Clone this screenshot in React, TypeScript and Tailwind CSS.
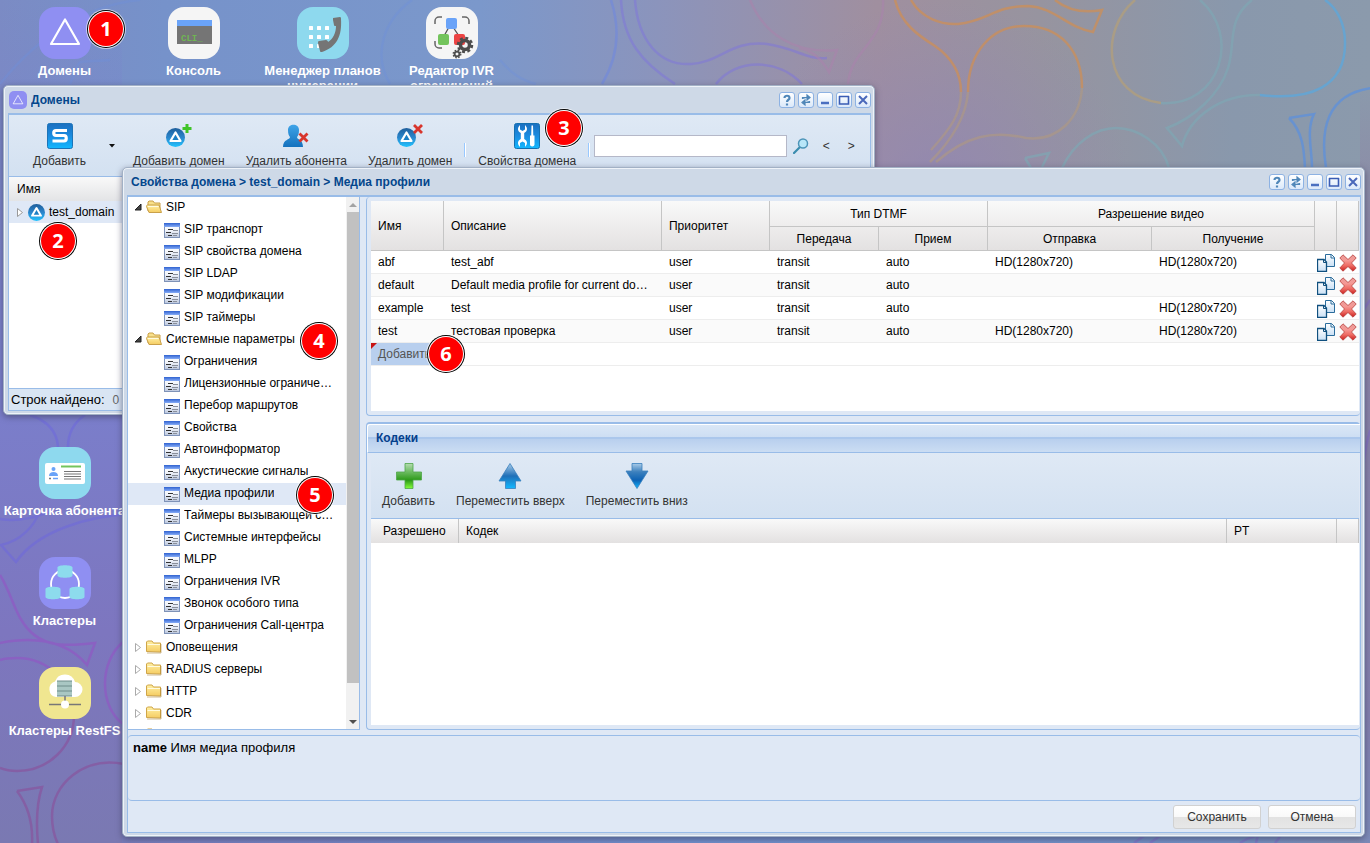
import { useState } from 'react';
import type { ReactNode } from 'react';

interface TreeLeaf {
  id: string;
  label: string;
}

interface TreeGroup {
  id: string;
  label: string;
  children?: TreeLeaf[];
}

interface MediaProfile {
  name: string;
  description: string;
  priority: string;
  dtmfOut: string;
  dtmfIn: string;
  videoOut: string;
  videoIn: string;
}

const TREE: TreeGroup[] = [
  {
    id: 'sip',
    label: 'SIP',
    children: [
      { id: 'sip-transport', label: 'SIP транспорт' },
      { id: 'sip-domain', label: 'SIP свойства домена' },
      { id: 'sip-ldap', label: 'SIP LDAP' },
      { id: 'sip-mod', label: 'SIP модификации' },
      { id: 'sip-timers', label: 'SIP таймеры' },
    ],
  },
  {
    id: 'system',
    label: 'Системные параметры',
    children: [
      { id: 'limits', label: 'Ограничения' },
      { id: 'license', label: 'Лицензионные ограничения' },
      { id: 'routes', label: 'Перебор маршрутов' },
      { id: 'props', label: 'Свойства' },
      { id: 'auto', label: 'Автоинформатор' },
      { id: 'tones', label: 'Акустические сигналы' },
      { id: 'media', label: 'Медиа профили' },
      { id: 'caller-timers', label: 'Таймеры вызывающей стороны' },
      { id: 'interfaces', label: 'Системные интерфейсы' },
      { id: 'mlpp', label: 'MLPP' },
      { id: 'ivr', label: 'Ограничения IVR' },
      { id: 'ring', label: 'Звонок особого типа' },
      { id: 'callcenter', label: 'Ограничения Call-центра' },
    ],
  },
  { id: 'alerts', label: 'Оповещения' },
  { id: 'radius', label: 'RADIUS серверы' },
  { id: 'http', label: 'HTTP' },
  { id: 'cdr', label: 'CDR' },
  { id: 'other', label: '' },
];

const PROFILES: MediaProfile[] = [
  { name: 'abf', description: 'test_abf', priority: 'user', dtmfOut: 'transit', dtmfIn: 'auto', videoOut: 'HD(1280x720)', videoIn: 'HD(1280x720)' },
  { name: 'default', description: 'Default media profile for current domain', priority: 'user', dtmfOut: 'transit', dtmfIn: 'auto', videoOut: '', videoIn: '' },
  { name: 'example', description: 'test', priority: 'user', dtmfOut: 'transit', dtmfIn: 'auto', videoOut: '', videoIn: 'HD(1280x720)' },
  { name: 'test', description: 'тестовая проверка', priority: 'user', dtmfOut: 'transit', dtmfIn: 'auto', videoOut: 'HD(1280x720)', videoIn: 'HD(1280x720)' },
];

// Gradients shared by all the small icons
function IconDefs() {
  const gradients: [string, string[]][] = [
    ['g-folder', ['#fff0a4', '#f5cc62']],
    ['g-leaf', ['#ffffff', '#f1f4fa', '#b9c5dc']],
    ['g-leaf-top', ['#2f62d0', '#86acf6']],
    ['g-blue', ['#1b6fc0', '#1a8ce0', '#12b8ff']],
    ['g-sphere', ['#1f5f9c', '#2a86cc', '#22c4ff']],
    ['g-user', ['#3fa4e8', '#1471bd']],
    ['g-plus', ['#b5dcb0', '#6dbb62', '#2c9a18', '#86ff3c']],
    ['g-arrow', ['#a9cbe8', '#1e6fb8', '#12b8ff']],
    ['g-arrow-down', ['#a9cbe8', '#3c80bd', '#0d62b4', '#12b8ff']],
    ['g-cross', ['#e89a98', '#f59a96', '#ee6a62', '#c81e1e']],
    ['g-page', ['#ffffff', '#c9e0f5']],
  ];
  return (
    <svg className="absolute size-0" aria-hidden="true">
      <defs>
        {gradients.map(([id, stops]) => (
          <linearGradient key={id} id={id} x1="0" y1="0" x2="0" y2="1">
            {stops.map((color, i) => (
              <stop key={i} offset={i / (stops.length - 1)} stopColor={color} />
            ))}
          </linearGradient>
        ))}
      </defs>
    </svg>
  );
}

function Wallpaper() {
  return (
    <svg
      className="absolute inset-0 h-full w-full"
      viewBox="0 0 1370 843"
      preserveAspectRatio="none"
      aria-hidden="true"
    >
      <defs>
        <linearGradient id="bg-top" x1="0" y1="0" x2="1" y2="0">
          <stop offset="0" stopColor="#7b8bc4" />
          <stop offset="0.12" stopColor="#7692ca" />
          <stop offset="0.35" stopColor="#7b98cb" />
          <stop offset="0.48" stopColor="#8b94bc" />
          <stop offset="0.64" stopColor="#a08f9f" />
          <stop offset="0.76" stopColor="#97949f" />
          <stop offset="0.9" stopColor="#8998ac" />
          <stop offset="1" stopColor="#8b9aac" />
        </linearGradient>
        <linearGradient id="bg-bottom" x1="0" y1="0" x2="1" y2="0">
          <stop offset="0" stopColor="#7b78b2" />
          <stop offset="0.15" stopColor="#757dbd" />
          <stop offset="0.5" stopColor="#6f8ecb" />
          <stop offset="0.9" stopColor="#7390c4" />
          <stop offset="1" stopColor="#7f8cb0" />
        </linearGradient>
        <linearGradient id="bg-side" x1="0" y1="0" x2="0" y2="1">
          <stop offset="0" stopColor="#7b80cc" stopOpacity="0" />
          <stop offset="0.45" stopColor="#7a7fcc" />
          <stop offset="0.75" stopColor="#7d76bf" />
          <stop offset="1" stopColor="#7a79b2" />
        </linearGradient>
        <linearGradient id="bg-fade" x1="0" y1="0" x2="0" y2="1">
          <stop offset="0.2" stopColor="#fff" stopOpacity="0" />
          <stop offset="1" stopColor="#fff" />
        </linearGradient>
        <radialGradient id="bg-violet" gradientUnits="userSpaceOnUse" cx="940" cy="190" r="190">
          <stop offset="0" stopColor="#9086b4" stopOpacity="0.8" />
          <stop offset="1" stopColor="#9086b4" stopOpacity="0" />
        </radialGradient>
        <linearGradient id="bg-right" x1="0" y1="0" x2="0" y2="1">
          <stop offset="0.1" stopColor="#8c84a4" stopOpacity="0" />
          <stop offset="0.3" stopColor="#8c84a4" />
          <stop offset="0.85" stopColor="#837fae" />
          <stop offset="1" stopColor="#7c8ab8" />
        </linearGradient>
        <mask id="bg-mask">
          <rect width="1370" height="843" fill="url(#bg-fade)" />
        </mask>
      </defs>
      <rect width="1370" height="843" fill="url(#bg-top)" />
      <rect width="1370" height="843" fill="url(#bg-bottom)" mask="url(#bg-mask)" />
      <rect width="122" height="843" fill="url(#bg-side)" />
      <rect width="1370" height="843" fill="url(#bg-violet)" />
      <rect x="1360" width="10" height="843" fill="url(#bg-right)" />
      <g fill="none" strokeWidth="2.500" strokeOpacity="0.55">
        <path stroke="#6d8fdc" strokeOpacity="0.35" d="M500 60c10 12 20 20 36 24M390 84c-18-30-6-64 22-84M0 84c40-50 90-80 140-84M70 84c14-30 0-20 40-24" />
        <path stroke="#6e86e0" d="M611 0c9 28 8 56-9 84" />
        <path stroke="#7f77d8" d="M621 0c2 40 20 62 54 84M635 0c3 40 24 66 56 64 30-2 40-24 76-20 28 4 40 16 60 14M716 84c20-26 62-26 86 0" />
        <path stroke="#a883ac" strokeOpacity="0.6" d="M750 0c14 34 44 54 87 50l-8 22c-8-14-18-22-30-24M883 0c2 44-32 48-35 84" />
        <path stroke="#d08f52" strokeOpacity="0.7" d="M895 0c6 24 24 36 40 46 20 14 26 30 26 46M911 0c10 18 30 25 47 24 30-3 36-18 70-18 26 1 40 22 65 26l9-22c-22 4-36-1-47-10M968 92c0-40 24-66 56-66 36 0 58 24 58 62" />
        <path stroke="#b09a80" strokeOpacity="0.6" d="M961 92c0 22-10 36-30 58M968 92c-2 26-16 48-38 70M1082 88c-2 30-24 54-56 50-34-8-60-2-90 24" />
        <path stroke="#b5a078" strokeOpacity="0.7" d="M1135 0c-36 30-32 96 26 103" />
        <path stroke="#7fa6b4" strokeOpacity="0.7" d="M1161 103c60 4 80-68 39-103M1252 0c-26 20-16 44-24 68-8 26-34 50-61 60l15 18c8-30 40-52 78-51M1062 168c12-26 34-40 54-40s46 14 53 40M1025 158l24-5-7 14M1025 158l6 10" />
        <path stroke="#58a8e0" strokeOpacity="0.7" d="M1260 95c50 6 86-8 85-53 0-18-8-34-20-42" />
        <path stroke="#5c90dc" strokeOpacity="0.75" d="M1372 88c-46 6-52 42-46 80M1289 118l25-4c-8 16-2 36-2 54M1289 118c14 14 15 32 16 50" />
        <path stroke="#6d68dc" d="M30 415c18 6 27 16 28 32M85 415c-12 8-17 18-17 32M0 519c20 3 36-2 52-8M130 514c-40 2-92 16-114 48L1 545c20-4 34-20 38-33" />
        <path stroke="#9650c4" d="M0 575c10 16 14 34 22 46 16 26 40 26 73 22l-8 22c-22-26-56-28-87-22M17 658c32 0 57 26 57 57M0 660c6-2 12-2 17-2M123 642c-24 20-24 64 0 82" />
        <path stroke="#8c4a98" d="M74 715c0 32-26 56-57 56-6 0-12-1-17-3M124 764c-40-8-72 20-72 52 0 10 2 20 6 28M17 791l25-4c-6 18-6 36-4 57M17 791c12 16 16 34 15 53" />
        <path stroke="#8068c8" d="M1370 300l-8 12M1370 430c-6 20-6 34-8 50M1134 843l14-10M1150 843l14-10M1240 843c8-6 14-6 18-8l-2 8M1275 843l8-10" />
      </g>
    </svg>
  );
}

function DomainsGlyph() {
  return (
    <svg viewBox="0 0 52 52" className="size-full">
      <path d="M26 12.500L12 37h28z" fill="none" stroke="#fff" strokeWidth="2.200" strokeLinejoin="round" />
    </svg>
  );
}

function ConsoleGlyph() {
  return (
    <svg viewBox="0 0 52 52" className="size-full">
      <rect x="9" y="13" width="35" height="24" fill="#757575" />
      <rect x="9" y="13" width="35" height="6" fill="#6aa3f8" />
      <text x="13" y="34" fontFamily="Liberation Mono" fontSize="9" fontWeight="bold" fill="#6fb552">CLI_</text>
    </svg>
  );
}

function PhoneGlyph() {
  return (
    <svg viewBox="0 0 52 52" className="size-full">
      {[19, 28, 37].map(y =>
        [12, 20, 28].map(x => (
          <rect key={`${x}-${y}`} x={x} y={y} width="4" height="4" rx="0.500" fill="#fff" />
        ))
      )}
      <path
        d="M36 11l7-1c1 0 1 1 1 2 1 17-4 28-19 33-1 0-2 0-2-1l-2-8c0-1 0-2 1-2l7-1c1 0 2 1 2 2 5-3 8-9 8-16-1 0-2 0-2-1l-1-5c0-1 0-2 0-2z"
        fill="#757575"
      />
    </svg>
  );
}

function IvrGlyph() {
  return (
    <svg viewBox="0 0 52 52" className="size-full">
      <path d="M9 17v-3a4 4 0 0 1 4-4h3M36 10h3a4 4 0 0 1 4 4v3M9 34v3a4 4 0 0 0 4 4h3" fill="none" stroke="#666" strokeWidth="1.500" />
      <path d="M23 20l-5 9M27 20l6 9" stroke="#555" strokeWidth="1.300" />
      <rect x="20" y="11" width="11" height="11" rx="2" fill="#6aa3f8" />
      <rect x="12" y="27" width="11" height="11" rx="2" fill="#73c45c" />
      <rect x="28" y="27" width="11" height="11" rx="2" fill="#ec4444" />
      <circle cx="39" cy="38" r="4.500" fill="none" stroke="#4d4d4d" strokeWidth="3.500" />
      <circle cx="39" cy="38" r="7" fill="none" stroke="#4d4d4d" strokeWidth="2.500" strokeDasharray="3 2.500" />
      <circle cx="31" cy="47" r="2.400" fill="none" stroke="#4d4d4d" strokeWidth="1.800" />
      <circle cx="31" cy="47" r="3.800" fill="none" stroke="#4d4d4d" strokeWidth="1.300" strokeDasharray="1.600 1.400" />
    </svg>
  );
}

function CardGlyph() {
  return (
    <svg viewBox="0 0 52 52" className="size-full">
      <rect x="6" y="16" width="40" height="21" rx="2" fill="#fff" />
      <circle cx="14.500" cy="22" r="2" fill="#6aa3f8" />
      <path d="M10 29c0-3 2-4 4.500-4s4.500 1 4.500 4z" fill="#6aa3f8" />
      <path d="M10 31.500h2" stroke="#777" strokeWidth="1.500" />
      <path d="M14 31.500h5" stroke="#6aa3f8" strokeWidth="1.500" />
      <path d="M22 19.500h20" stroke="#73c45c" strokeWidth="2" />
      <path d="M25 24.500h17M25 27h17M25 29.500h17M25 32h17" stroke="#757575" strokeWidth="1.200" />
    </svg>
  );
}

function ClusterGlyph() {
  const cylinder = (x: number, y: number) => (
    <path d={`M${x} ${y + 2}c0-3 15-3 15 0v8c0 3-15 3-15 0z`} fill="#8ddbed" />
  );
  return (
    <svg viewBox="0 0 52 52" className="size-full">
      <circle cx="26" cy="27" r="14" fill="none" stroke="#fff" strokeWidth="1.800" />
      {cylinder(18.5, 8.5)}
      {cylinder(6.5, 30)}
      {cylinder(30.5, 30)}
    </svg>
  );
}

function CloudGlyph() {
  return (
    <svg viewBox="0 0 52 52" className="size-full">
      <path d="M17 30a8 8 0 0 1-1-15.500 10.500 10.500 0 0 1 20 .5 7.500 7.500 0 0 1 0 15z" fill="#fff" />
      <rect x="18" y="14" width="15" height="15" fill="#a9c7c3" />
      <path d="M18 14h15M18 19h15M18 24h15M18 29h15" stroke="#6f8d8a" strokeWidth="1" />
      <path d="M26 29v8M10 37.500h32" stroke="#777" strokeWidth="1.500" />
      <circle cx="26" cy="37.500" r="4" fill="#fff" />
    </svg>
  );
}

function Shortcut({ label, tile, children }: { label: string; tile: string; children: ReactNode }) {
  return (
    <button type="button" className="flex h-[110px] w-[129px] flex-col items-center gap-1">
      <span className={`block size-[52px] shrink-0 rounded-2xl ${tile}`}>{children}</span>
      <span className="text-[13px] leading-[15px] font-bold whitespace-pre-line text-white">{label}</span>
    </button>
  );
}

function WindowTools() {
  const tools: { name: string; icon: ReactNode }[] = [
    { name: 'Справка', icon: <path d="M5.500 6c0-3 5-3 5 0 0 2-2.500 1.500-2.500 4M8 11.500v2" stroke="#4f86b8" strokeWidth="2.200" /> },
    { name: 'Обновить', icon: <path d="M4.500 7V5.500h6M9 3l3 2.500L9 8zM11.500 9v1.500h-6M7 8l-3 2.500L7 13z" fill="#4f86b8" stroke="#4f86b8" strokeWidth="1.200" /> },
    { name: 'Свернуть', icon: <path d="M4 11h8" stroke="#4a6fc0" strokeWidth="2.500" /> },
    { name: 'Развернуть', icon: <path d="M3 4.500h10M3.500 4v8h9V4" stroke="#3a5cb4" strokeWidth="1.600" /> },
    { name: 'Закрыть', icon: <path d="M4 4l8 8M12 4l-8 8" stroke="#4a68ba" strokeWidth="2" /> },
  ];
  return (
    <div className="flex gap-[3px]">
      {tools.map(tool => (
        <button
          key={tool.name}
          type="button"
          aria-label={tool.name}
          className="size-4 rounded-[3px] border border-[#8db2e3] bg-linear-to-b from-white to-[#dbe9fa]"
        >
          <svg viewBox="1 1 14 14" className="size-full" fill="none">{tool.icon}</svg>
        </button>
      ))}
    </div>
  );
}

function DesktopWindow({ title, icon, className, children }: { title: string; icon?: ReactNode; className: string; children: ReactNode }) {
  return (
    <section
      aria-label={title}
      className={`absolute flex flex-col rounded-[5px] border border-[#a2b1c5] bg-[#ced9e7] px-[3px] pt-0 pb-[3px] pl-1 shadow-[inset_0_0_0_1px_#eef3f9,0_2px_6px_rgba(60,60,90,0.6)] ${className}`}
    >
      <header className="flex h-[27px] shrink-0 items-center gap-1 pl-1">
        {icon}
        <h2 className="flex-1 truncate text-[12px] leading-4 font-bold text-[#04468c]">{title}</h2>
        <WindowTools />
      </header>
      <div className="flex min-h-0 flex-1 flex-col border border-t-2 border-[#99bce8] bg-[#dfe8f5]">{children}</div>
    </section>
  );
}

function DomainSphere() {
  return (
    <>
      <circle cx="9.500" cy="14.500" r="9.500" fill="url(#g-sphere)" />
      <path d="M9.500 9.500L4.500 18h10z" fill="#1b7fc4" stroke="#fff" strokeWidth="2.200" strokeLinejoin="round" />
    </>
  );
}

function ToolbarButton({ label, icon }: { label: string; icon: ReactNode }) {
  return (
    <button type="button" className="flex flex-col items-center gap-1 px-2 text-[12px] leading-4 whitespace-nowrap text-[#333]">
      <svg viewBox="0 0 26 26" className="size-[26px]">{icon}</svg>
      {label}
    </button>
  );
}

function Separator() {
  return <span className="-mx-px mt-2 h-[14px] w-[2px] shrink-0 border-r border-l border-r-white border-l-[#98c8ff]" />;
}

function DomainsWindow() {
  const [query, setQuery] = useState('');

  return (
    <DesktopWindow
      title="Домены"
      className="top-[85px] left-[3px] h-[330px] w-[872px]"
      icon={
        <span className="-ml-[3px] block size-[18px] rounded-[5px] bg-[#8f8ff2]">
          <DomainsGlyph />
        </span>
      }
    >
      <div className="flex h-[62px] shrink-0 items-center gap-[5px] border-b border-[#99bce8] bg-linear-to-b from-[#dfe9f5] to-[#d3e1f1] pl-4">
        <div className="flex items-center">
          <ToolbarButton
            label="Добавить"
            icon={
              <>
                <rect x="0.500" y="0.500" width="25" height="25" rx="2" fill="url(#g-blue)" stroke="#1c74b8" />
                <path d="M20 7.500H9c-3 0-3 5 0 5h8c3 0 3 5.500 0 5.500H5.500" fill="none" stroke="#fff" strokeWidth="3.200" />
              </>
            }
          />
          <button type="button" aria-label="Меню добавления" className="flex w-[26px] items-center justify-end pr-[5px]">
            <svg viewBox="0 0 6 4" className="h-1 w-1.5"><path d="M0 0h6L3 3.500z" fill="#111" /></svg>
          </button>
        </div>
        <ToolbarButton
          label="Добавить домен"
          icon={
            <>
              <DomainSphere />
              <path d="M21 1v9M16.500 5.500h9" stroke="#3fc428" strokeWidth="3" />
            </>
          }
        />
        <ToolbarButton
          label="Удалить абонента"
          icon={
            <>
              <path d="M5 7c0-7 11-7 11 0 0 4-1 6-2 7 0 3 6 2 6 10H0c0-8 7-7 7-10-1-1-2-3-2-7z" fill="url(#g-user)" />
              <path d="M16.500 10.500l8 8M24.500 10.500l-8 8" stroke="#d8352c" strokeWidth="2.800" />
            </>
          }
        />
        <ToolbarButton
          label="Удалить домен"
          icon={
            <>
              <DomainSphere />
              <path d="M17 2l8 8M25 2l-8 8" stroke="#d8352c" strokeWidth="2.800" />
            </>
          }
        />
        <Separator />
        <ToolbarButton
          label="Свойства домена"
          icon={
            <>
              <rect x="0.500" y="0.500" width="25" height="25" rx="2" fill="url(#g-blue)" stroke="#1470b0" />
              <path d="M6 2v4.500l2.500 1.500L11 6.500V2c3 3 2.500 6.500-.8 8v6c3.300 1.500 3.800 5 .8 8v-4l-2.500-1.500L6 20v4c-3-3-2.500-6.500.8-8v-6C3.500 8.500 3 5 6 2z" fill="#fff" />
              <path d="M17.500 2.500h1.500l.3 10h1.200v9c0 2.500-4.500 2.500-4.500 0v-9h1.200z" fill="#fff" />
            </>
          }
        />
        <Separator />
        <input
          type="text"
          aria-label="Поиск"
          value={query}
          onChange={e => setQuery(e.target.value)}
          className="h-[22px] w-[193px] border border-[#b5b8c8] bg-white px-1 text-[12px] outline-none"
        />
        <button type="button" aria-label="Найти" className="ml-px size-4">
          <svg viewBox="0 0 16 16" className="size-4">
            <path d="M1 15l6-6" stroke="#3a8cae" strokeWidth="2.200" strokeLinecap="round" />
            <circle cx="10" cy="5.500" r="4.500" fill="#b8e6f8" stroke="#4c94b8" strokeWidth="1.500" />
          </svg>
        </button>
        <button type="button" className="ml-0.5 w-5 text-[12px] text-[#333]">&lt;</button>
        <button type="button" className="w-5 text-[12px] text-[#333]">&gt;</button>
      </div>

      <div className="flex h-6 shrink-0 items-center bg-linear-to-b from-[#f9f9f9] to-[#e3e4e6] pl-2 text-[12px]">Имя</div>
      <div className="flex-1 bg-white">
        <button type="button" className="flex h-[22px] w-full items-center bg-[#dfe8f6] pl-2 text-[12px]">
          <svg viewBox="0 0 7 9" className="h-[9px] w-[7px]"><path d="M.5.5v8l5-4z" fill="#fff" stroke="#999" /></svg>
          <svg viewBox="0 5 19 19" className="mr-1 ml-1 size-[17px]"><DomainSphere /></svg>
          test_domain
        </button>
      </div>
      <div className="flex h-[22px] shrink-0 items-center gap-2 border-t border-[#99bce8] bg-[#d9e5f3] pl-0.5 text-[13px]">
        <span>Строк найдено:</span>
        <span className="text-[12px] text-[#666]">0</span>
      </div>
    </DesktopWindow>
  );
}

function FolderIcon({ open }: { open: boolean }) {
  if (open) {
    return (
      <svg viewBox="0 0 16 16" className="size-4 shrink-0">
        <path d="M2 12V3l1-1h4l1.500 2H14v9z" fill="#f8e08a" stroke="#c9a04a" />
        <path d="M3 13.500L.5 7.500c0-1 .5-1.500 1-1.500H13l2.500 7.500z" fill="url(#g-folder)" stroke="#c9a04a" />
        <path d="M2 7.500h10.500" stroke="#fffbe0" />
      </svg>
    );
  }
  return (
    <svg viewBox="0 0 16 16" className="size-4 shrink-0">
      <path d="M.5 12.500V3l1-1h4.500l1.500 2h7v9z" fill="url(#g-folder)" stroke="#cfa548" />
      <path d="M1.500 5.500h12.500" stroke="#fffbe0" />
      <path d="M1 14h14V5" fill="none" stroke="#a27a2a" strokeOpacity="0.5" />
    </svg>
  );
}

function LeafIcon() {
  return (
    <svg viewBox="0 0 16 16" className="size-4 shrink-0">
      <rect x="0.500" y="1.500" width="15" height="14" fill="url(#g-leaf)" stroke="#7f93b8" />
      <rect x="0" y="1" width="16" height="4" fill="url(#g-leaf-top)" />
      <path d="M4 7.500h5M2 10.500h5M4 13.500h4" stroke="#333" strokeWidth="1.200" />
      <path d="M9 8.500h5M8 11.500h6M9 13.500h4" stroke="#8a8f9a" />
    </svg>
  );
}

function SettingsTree() {
  const [selected, setSelected] = useState('media');
  const [expanded, setExpanded] = useState<string[]>(['sip', 'system']);

  const toggle = (id: string) => {
    setExpanded(prev => (prev.includes(id) ? prev.filter(x => x !== id) : [...prev, id]));
  };

  return (
    <nav aria-label="Разделы свойств" className="flex w-[232px] shrink-0 border-r border-b border-[#99bce8] bg-white">
      <ul className="h-full min-w-0 flex-1 overflow-hidden text-[12px] leading-5">
        {TREE.map(group => {
          const open = expanded.includes(group.id) && !!group.children;
          return (
            <li key={group.id}>
              <button type="button" onClick={() => toggle(group.id)} className="flex h-[22px] w-full items-center pb-0.5 pl-[6px]">
                <svg viewBox="0 0 8 10" className="mr-1 h-[10px] w-2">
                  {open ? <path d="M7 2v6H1z" fill="#444" stroke="#222" /> : <path d="M1.500 1.500v8l5-4z" fill="#fff" stroke="#aaa" />}
                </svg>
                <FolderIcon open={open} />
                {group.label && <span className="ml-1">{group.label}</span>}
              </button>
              {open && (
                <ul>
                  {group.children?.map(leaf => (
                    <li key={leaf.id}>
                      <button
                        type="button"
                        onClick={() => setSelected(leaf.id)}
                        className={`flex h-[22px] w-full items-center pr-3 pl-9 ${selected === leaf.id ? 'bg-[#dfe8f6]' : ''}`}
                      >
                        <LeafIcon />
                        <span className="ml-1 truncate pb-0.5">{leaf.label}</span>
                      </button>
                    </li>
                  ))}
                </ul>
              )}
            </li>
          );
        })}
      </ul>
      <div className="flex w-[13px] shrink-0 flex-col items-center bg-[#f1f1f1] pl-px">
        <svg viewBox="0 0 8 15" className="h-[15px] w-2"><path d="M0 10h8L4 6z" fill="#a3a3a3" /></svg>
        <div className="h-[471px] w-full bg-[#c1c1c1]" />
        <svg viewBox="0 0 8 15" className="mt-auto h-[15px] w-2"><path d="M0 6h8l-4 4z" fill="#505050" /></svg>
      </div>
    </nav>
  );
}

function CopyIcon() {
  return (
    <svg viewBox="0 0 18 18" className="size-[18px]">
      <path d="M8.500 .5h6l3 3v9h-9z" fill="url(#g-page)" stroke="#2a6c9c" />
      <path d="M14 .5v3.500h3.500" fill="none" stroke="#2a6c9c" />
      <path d="M.5 5.500h6.500l2.500 2.500v9.500h-9z" fill="url(#g-page)" stroke="#10507f" strokeWidth="1.300" />
      <path d="M6.500 5.500v3h3" fill="none" stroke="#10507f" />
    </svg>
  );
}

function DeleteIcon() {
  return (
    <svg viewBox="0 0 18 18" className="size-[18px]">
      <path
        d="M4 .8L9 5.500 14 .8 17.200 4 12.500 9l4.700 5-3.200 3.200L9 12.500l-5 4.700L.8 14 5.500 9 .8 4z"
        fill="url(#g-cross)"
        stroke="#b8403c"
        strokeOpacity="0.8"
        strokeLinejoin="round"
      />
    </svg>
  );
}

function ProfilesGrid() {
  const th = 'border-r border-b border-[#c5c5c5] px-[7px] font-normal';
  const td = 'h-[23px] truncate border-b border-[#ededed] px-[7px]';

  return (
    <div className="h-[219px] shrink-0 rounded-[4px] border border-t-0 border-r-0 border-[#99bce8] p-1 pr-px">
      <div className="h-full overflow-hidden bg-white">
        <table className="w-full table-fixed border-separate border-spacing-0 text-left text-[12px] leading-4">
          <colgroup>
            <col className="w-[73px]" />
            <col />
            <col className="w-[108px]" />
            <col className="w-[109px]" />
            <col className="w-[109px]" />
            <col className="w-[164px]" />
            <col className="w-[163px]" />
            <col className="w-[22px]" />
            <col className="w-[22px]" />
          </colgroup>
          <thead className="bg-linear-to-b from-[#f9f9f9] to-[#e3e1e1]">
            <tr className="h-[26px]">
              <th rowSpan={2} className={th}>Имя</th>
              <th rowSpan={2} className={th}>Описание</th>
              <th rowSpan={2} className={th}>Приоритет</th>
              <th colSpan={2} className={`${th} text-center`}>Тип DTMF</th>
              <th colSpan={2} className={`${th} text-center`}>Разрешение видео</th>
              <th rowSpan={2} className={th} aria-label="Копировать" />
              <th rowSpan={2} className={th} aria-label="Удалить" />
            </tr>
            <tr className="h-6">
              <th className={`${th} text-center`}>Передача</th>
              <th className={`${th} text-center`}>Прием</th>
              <th className={`${th} text-center`}>Отправка</th>
              <th className={`${th} text-center`}>Получение</th>
            </tr>
          </thead>
          <tbody>
            {PROFILES.map(p => (
              <tr key={p.name} className="even:bg-[#fafafa]">
                <td className={td}>{p.name}</td>
                <td className={td}>{p.description}</td>
                <td className={td}>{p.priority}</td>
                <td className={td}>{p.dtmfOut}</td>
                <td className={td}>{p.dtmfIn}</td>
                <td className={td}>{p.videoOut}</td>
                <td className={td}>{p.videoIn}</td>
                <td className="border-b border-[#ededed] pl-0.5">
                  <button type="button" aria-label={`Копировать ${p.name}`} className="block pt-px"><CopyIcon /></button>
                </td>
                <td className="border-b border-[#ededed] pl-0.5">
                  <button type="button" aria-label={`Удалить ${p.name}`} className="block pt-px"><DeleteIcon /></button>
                </td>
              </tr>
            ))}
            <tr>
              <td className="h-[23px] border-b border-[#ededed] p-0">
                <button type="button" className="relative block h-[22px] w-full bg-[#b8cfee] pl-[7px] text-left text-[#555]">
                  <span className="absolute top-0 left-0 border-t-[6px] border-r-[6px] border-t-[#c81414] border-r-transparent" />
                  Добавить
                </button>
              </td>
              <td colSpan={8} className="border-b border-[#ededed]" />
            </tr>
          </tbody>
        </table>
      </div>
    </div>
  );
}

function CodecsPanel() {
  return (
    <section aria-label="Кодеки" className="mt-[6px] flex min-h-0 flex-1 flex-col rounded-[4px] border border-t-2 border-r-0 border-[#99bce8]">
      <h3 className="flex h-[29px] shrink-0 items-center rounded-tl-[3px] border-t border-b border-l border-t-white border-b-[#99bce8] border-l-white bg-[linear-gradient(to_bottom,#dae7f6_0,#cddef3_45%,#abc7ec_46%,#abc7ec_50%,#b8cfee_51%,#cbddf3_100%)] pb-0.5 pl-2 text-[12px] font-bold text-[#04408c]">
        Кодеки
      </h3>
      <div className="flex min-h-0 flex-1 flex-col p-1 pt-0 pr-px">
        <div className="flex h-[66px] shrink-0 items-center gap-[5px] border-b border-[#99bce8] bg-linear-to-b from-[#dfe9f5] to-[#d3e1f1] pt-px pl-[3px]">
          <ToolbarButton
            label="Добавить"
            icon={<path d="M9 .5h8v8.500h8.500v8H17v8.500H9V17H.5V9H9z" fill="url(#g-plus)" stroke="#4fa648" strokeOpacity="0.8" />}
          />
          <ToolbarButton
            label="Переместить вверх"
            icon={<path d="M13 .5l11 17.500h-5.500v7.500h-10V18H2z" fill="url(#g-arrow)" stroke="#3a80bd" strokeOpacity="0.8" />}
          />
          <ToolbarButton
            label="Переместить вниз"
            icon={<path d="M8 .5h10V8h6L13 25.500 2 8h6z" fill="url(#g-arrow-down)" stroke="#3a80bd" strokeOpacity="0.8" />}
          />
        </div>
        <div className="min-h-0 flex-1 bg-white">
          <table className="w-full table-fixed border-separate border-spacing-0 text-left text-[12px] leading-4">
            <thead className="bg-linear-to-b from-[#f9f9f9] to-[#e3e1e1]">
              <tr className="h-6">
                <th className="w-[88px] border-r border-[#c5c5c5] pl-3 font-normal">Разрешено</th>
                <th className="border-r border-[#c5c5c5] px-[7px] font-normal">Кодек</th>
                <th className="w-[110px] border-r border-[#c5c5c5] px-[7px] font-normal">PT</th>
                <th className="w-[22px] border-r border-[#c5c5c5]" aria-label="Удалить" />
              </tr>
            </thead>
          </table>
        </div>
      </div>
    </section>
  );
}

function DomainPropertiesWindow() {
  const button =
    'h-6 w-[88px] rounded-[3px] border border-[#d1d1d1] bg-[linear-gradient(to_bottom,#ffffff_0,#f9f9f9_48%,#e2e2e2_52%,#e7e7e7_100%)] text-[12px] text-[#333]';

  return (
    <DesktopWindow
      title="Свойства домена > test_domain > Медиа профили"
      className="top-[167px] right-[5px] bottom-[6px] left-[122px]"
    >
      <div className="flex min-h-0 flex-1">
        <SettingsTree />
        <div className="ml-[6px] flex min-w-0 flex-1 flex-col">
          <ProfilesGrid />
          <CodecsPanel />
        </div>
      </div>
      <p className="mt-[5px] h-[66px] shrink-0 rounded-[4px] border border-r-0 border-l-0 border-[#99bce8] px-[5px] pt-1 text-[13px] leading-4">
        <b>name</b> Имя медиа профиля
      </p>
      <footer className="flex shrink-0 justify-end gap-[7px] pt-1 pr-1 pb-[3px]">
        <button type="button" className={button}>Сохранить</button>
        <button type="button" className={button}>Отмена</button>
      </footer>
    </DesktopWindow>
  );
}

function Marker({ n, className }: { n: number; className: string }) {
  return (
    <span
      className={`absolute z-10 flex size-[34px] items-center justify-center rounded-full bg-[#ff0000] font-['Noto_Sans'] text-[20px] leading-none font-bold text-white shadow-[0_0_0_1px_#fff,0_0_0_2px_#000,0_0_0_3px_rgba(255,255,255,0.6)] ${className}`}
    >
      {n}
    </span>
  );
}

export default function App() {
  return (
    <main className="relative min-h-screen w-full overflow-hidden font-['Liberation_Sans',Arial,sans-serif] text-black">
      <IconDefs />
      <Wallpaper />

      {/* Desktop shortcuts */}
      <div className="relative pt-[7px]">
        <div className="flex">
          <Shortcut label="Домены" tile="bg-[#8f8ff2]"><DomainsGlyph /></Shortcut>
          <Shortcut label="Консоль" tile="bg-[#f5f5f5]"><ConsoleGlyph /></Shortcut>
          <Shortcut label={'Менеджер планов\nнумерации'} tile="bg-[#8ed9ee]"><PhoneGlyph /></Shortcut>
          <Shortcut label={'Редактор IVR\nограничений'} tile="bg-[#f5f5f5]"><IvrGlyph /></Shortcut>
        </div>
        <div className="mt-[330px]">
          <Shortcut label="Карточка абонента" tile="bg-[#8ed9ee]"><CardGlyph /></Shortcut>
          <Shortcut label="Кластеры" tile="bg-[#8f8ff2]"><ClusterGlyph /></Shortcut>
          <Shortcut label="Кластеры RestFS" tile="bg-[#f0e690]"><CloudGlyph /></Shortcut>
        </div>
      </div>

      <DomainsWindow />
      <DomainPropertiesWindow />

      <Marker n={1} className="top-[12px] left-[89px]" />
      <Marker n={2} className="top-[224px] left-[41px]" />
      <Marker n={3} className="top-[111px] left-[547px]" />
      <Marker n={4} className="top-[324px] left-[302px]" />
      <Marker n={5} className="top-[478px] left-[298px]" />
      <Marker n={6} className="top-[337px] left-[429px]" />
    </main>
  );
}
